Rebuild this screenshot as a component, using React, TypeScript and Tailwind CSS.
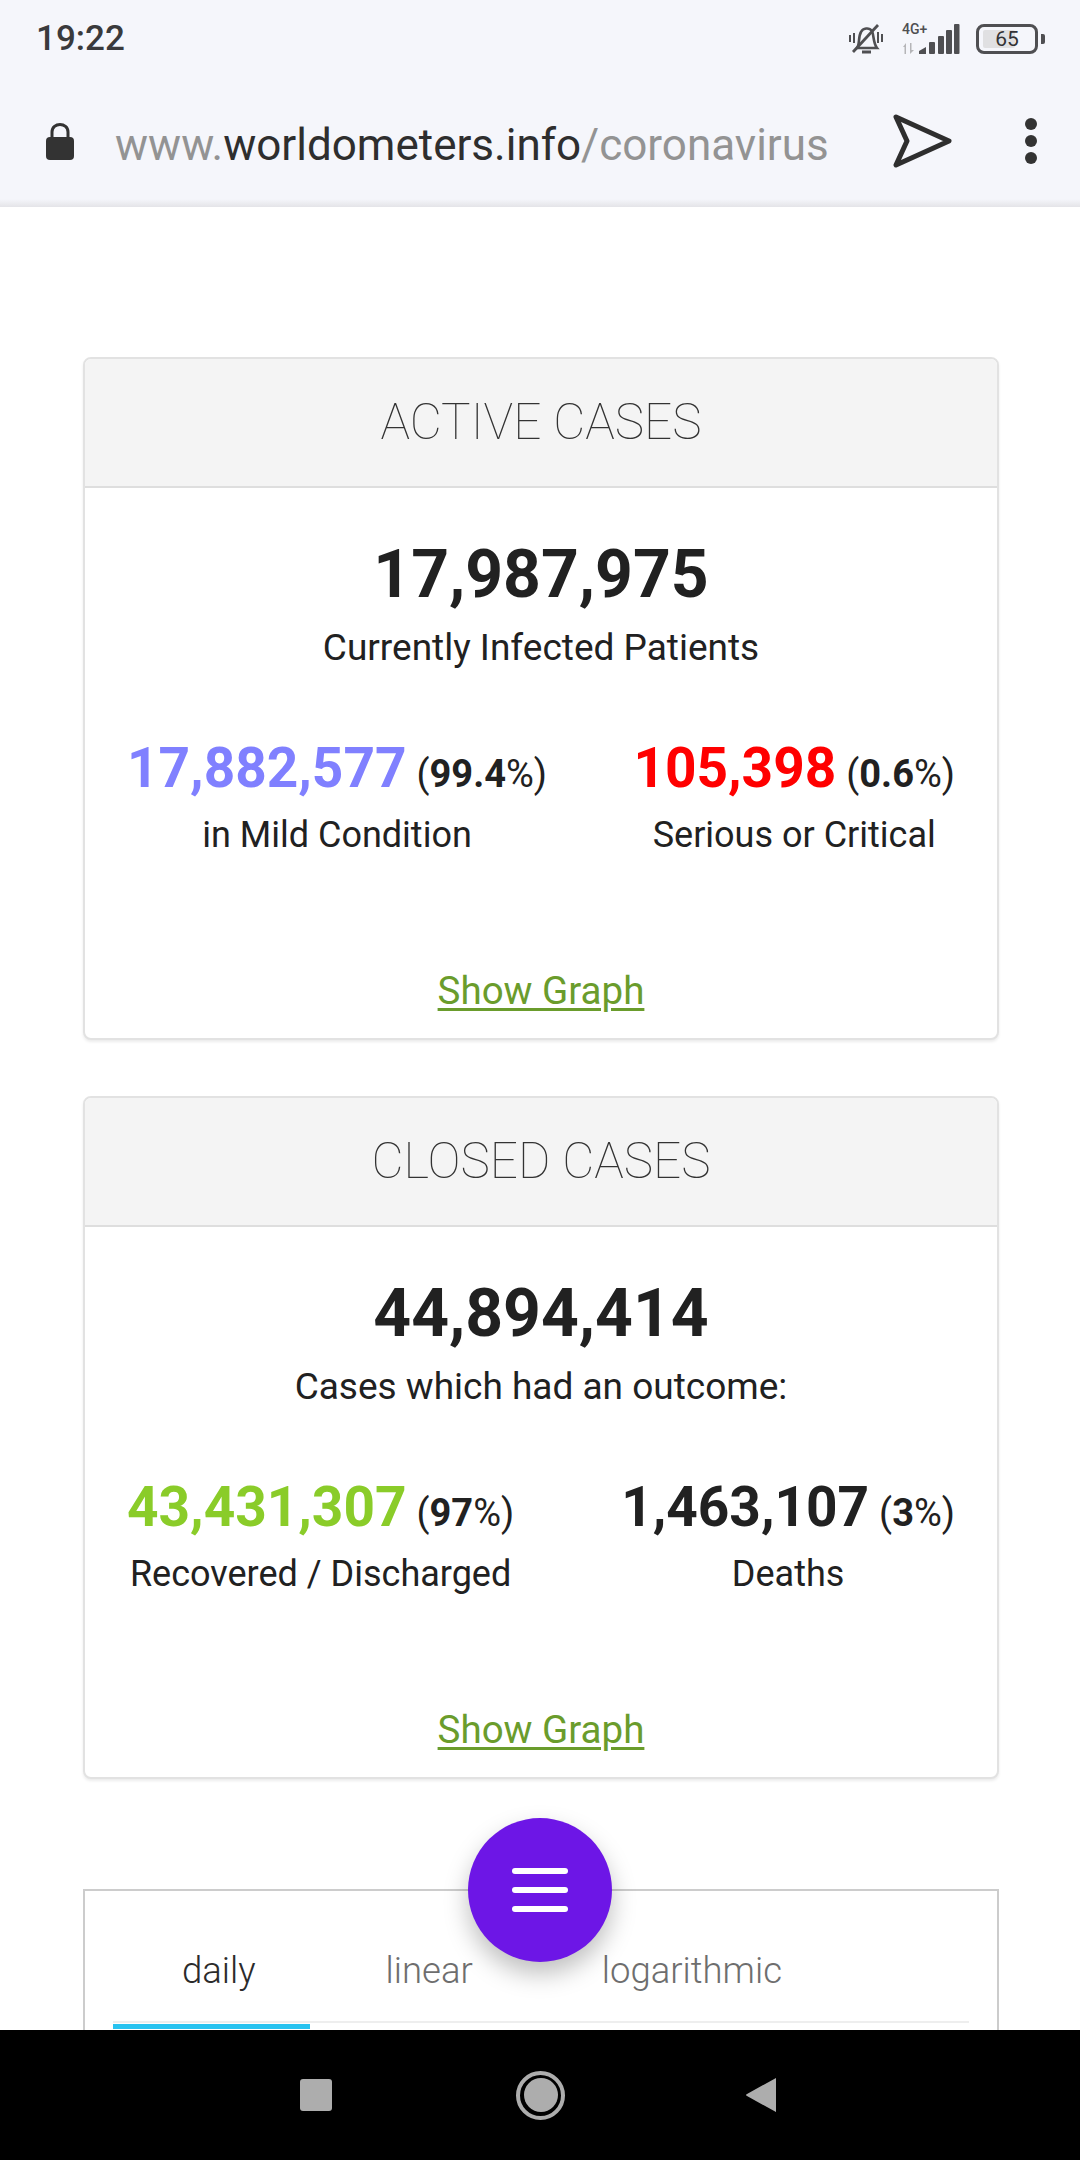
const roboto = "font-['Roboto',sans-serif]";

const StatusIcons = () => (
  <div className="flex items-center">
    <svg width="36" height="34" viewBox="0 0 36 34" fill="none" stroke="#4f4f52" strokeWidth="2.6">
      <path d="M9 26 C12 22 10 15 13 10 C15 6 21 5 24 9 C26 13 25 21 29 26 Z" />
      <path d="M14 30 H23" strokeWidth="3" />
      <path d="M5 30 L30 3" strokeWidth="2.8" />
      <path d="M2 13 V20 M34 12 V20" strokeWidth="2" />
      <path d="M6 11 V21 M30 10 V21" strokeWidth="2" />
    </svg>
    <div className="relative ml-[18px] h-[32px] w-[58px]">
      <span className={`${roboto} absolute left-0 top-[-1px] text-[14px] font-medium leading-[14px] text-[#4f4f52]`}>4G+</span>
      <svg className="absolute left-0 top-0" width="58" height="32" viewBox="0 0 58 32">
        <path d="M1 24 L4 20 V31 H2.5 V24 Z M8 20 H9.5 V27 L12 27 L8 31 Z" fill="#b5b5b8" />
        <g fill="#4f4f52">
          <path d="M17 31 V28 L24 24 V31 Z" />
          <rect x="27" y="19" width="6" height="12" rx="1" />
          <rect x="36" y="13" width="6" height="18" rx="1" />
          <rect x="44" y="7" width="6" height="24" rx="1" />
          <rect x="52" y="1" width="5.5" height="30" rx="1" />
        </g>
      </svg>
    </div>
    <div className="ml-[16px] flex items-center gap-[3px]">
      <div className="relative flex h-[30px] w-[62px] items-center justify-center overflow-hidden rounded-[8px] border-[3px] border-[#4f4f52]">
        <div className="absolute bottom-[3px] left-[4px] top-[3px] w-[32px] rounded-[2px] bg-[#e0e0e2]" />
        <span className={`${roboto} relative text-[21px] leading-none text-[#333336]`}>65</span>
      </div>
      <div className="h-[10px] w-[4px] rounded-r-[2px] bg-[#4f4f52]" />
    </div>
  </div>
);

const Stat = ({
  value,
  pct,
  label,
  color,
}: {
  value: string;
  pct: string;
  label: string;
  color: string;
}) => (
  <div className="text-center">
    <div className="whitespace-nowrap leading-[44px] text-[#212121]">
      <span className={`text-[55px] font-bold ${color}`}>{value}</span>
      <span className="ml-[10px] text-[38px]">
        (<span className="font-bold">{pct}</span>%)
      </span>
    </div>
    <div className="mt-[9px] text-[36px] leading-[44px] text-[#212121]">{label}</div>
  </div>
);

const CasesCard = ({
  title,
  total,
  caption,
  children,
}: {
  title: string;
  total: string;
  caption: string;
  children: React.ReactNode;
}) => (
  <section className="h-[683px] overflow-hidden rounded-[8px] border-2 border-[#e2e2e2] bg-white shadow-[0_2px_3px_rgba(0,0,0,0.08)]">
    <div className="flex h-[129px] items-center justify-center border-b-2 border-[#dedede] bg-[#f4f4f4] text-[49.5px] font-thin text-[#333]">
      {title}
    </div>
    <div className="pt-[47px] text-center">
      <div className="text-[66px] font-bold leading-[80px] text-[#212121]">{total}</div>
      <div className="mt-[11px] text-[37px] leading-[44px] text-[#212121]">{caption}</div>
    </div>
    <div className="mt-[76px] flex justify-between px-[42px]">{children}</div>
    <div className="mt-[112px] text-center">
      <a className="text-[38.5px] leading-[44px] text-[#6a9c2c] underline decoration-[3px] underline-offset-[4px]">Show Graph</a>
    </div>
  </section>
);

export default function App() {
  return (
    <div className={`${roboto} relative flex h-[2160px] w-[1080px] flex-col overflow-hidden bg-white`}>
      <header className="h-[207px] shrink-0 bg-[#f5f6fb]">
        <div className="flex h-[78px] items-center justify-between pl-[36px] pr-[35px]">
          <span className="text-[35px] font-medium text-[#3a3a3c]">19:22</span>
          <StatusIcons />
        </div>
        <div className="flex h-[121px] items-center pl-[46px] pr-[43px] pt-[5px]">
          <svg width="28" height="38" viewBox="0 0 28 38" fill="none">
            <path d="M6 18 V10 C6 0 22 0 22 10 V18" stroke="#333" strokeWidth="3" />
            <rect x="0" y="15" width="28" height="23" rx="4" fill="#333" />
          </svg>
          <div className="ml-[41px] flex-1 whitespace-nowrap pt-[8px] text-[44px] text-[#939393]">
            www.<span className="text-[#2e2e2e]">worldometers.info</span>/coronavirus
          </div>
          <svg width="60" height="54" viewBox="0 0 60 54" fill="none" stroke="#2e2e2e" strokeWidth="5" strokeLinejoin="round">
            <path d="M3 3 L56 27 L3 51 L14 27 Z" />
          </svg>
          <div className="ml-[72px] flex flex-col gap-[5px]">
            <span className="h-[12px] w-[12px] rounded-full bg-[#333]" />
            <span className="h-[12px] w-[12px] rounded-full bg-[#333]" />
            <span className="h-[12px] w-[12px] rounded-full bg-[#333]" />
          </div>
        </div>
        <div className="h-[8px] bg-gradient-to-b from-[#f5f6fb] to-[#e4e4e8]" />
      </header>

      <main className="flex-1 overflow-hidden pl-[83px] pr-[81px] pt-[150px]">
        <div className="flex flex-col gap-[56px]">
          <CasesCard title="ACTIVE CASES" total="17,987,975" caption="Currently Infected Patients">
            <Stat value="17,882,577" pct="99.4" label="in Mild Condition" color="text-[#8080ff]" />
            <Stat value="105,398" pct="0.6" label="Serious or Critical" color="text-[#ff0000]" />
          </CasesCard>
          <CasesCard title="CLOSED CASES" total="44,894,414" caption="Cases which had an outcome:">
            <Stat value="43,431,307" pct="97" label="Recovered / Discharged" color="text-[#8acc29]" />
            <Stat value="1,463,107" pct="3" label="Deaths" color="text-[#212121]" />
          </CasesCard>
        </div>
        <div className="mt-[110px] h-[200px] border-2 border-[#cccccc] px-[28px] pt-[50px]">
          <div className="relative h-[82px] border-b-2 border-[#eeeeee]">
            <div className="flex text-[36.5px] font-light leading-[60px] text-[#6e6e6e]">
              <span className="ml-[69px] text-[#2b2b2b]">daily</span>
              <span className="ml-[130px]">linear</span>
              <span className="ml-[129px]">logarithmic</span>
            </div>
            <div className="absolute bottom-[-8px] left-0 h-[5px] w-[197px] bg-[#29c3f0]" />
          </div>
        </div>
      </main>

      <button className="absolute left-[468px] top-[1818px] flex h-[144px] w-[144px] flex-col items-center justify-center gap-[13px] rounded-full bg-[#6d16e6] shadow-[0_12px_24px_rgba(0,0,0,0.25)]">
        <span className="h-[6px] w-[56px] rounded-full bg-white" />
        <span className="h-[6px] w-[56px] rounded-full bg-white" />
        <span className="h-[6px] w-[56px] rounded-full bg-white" />
      </button>

      <nav className="flex h-[130px] shrink-0 items-center bg-black">
        <div className="ml-[300px] h-[32px] w-[32px] rounded-[3px] bg-[#adadad]" />
        <div className="ml-[184px] flex h-[49px] w-[49px] items-center justify-center rounded-full border-[4px] border-[#adadad]">
          <div className="h-[34px] w-[34px] rounded-full bg-[#adadad]" />
        </div>
        <svg className="ml-[180px]" width="32" height="36" viewBox="0 0 32 36">
          <path d="M31 1 V35 L2 19 Q0 18 2 17 Z" fill="#adadad" />
        </svg>
      </nav>
    </div>
  );
}
